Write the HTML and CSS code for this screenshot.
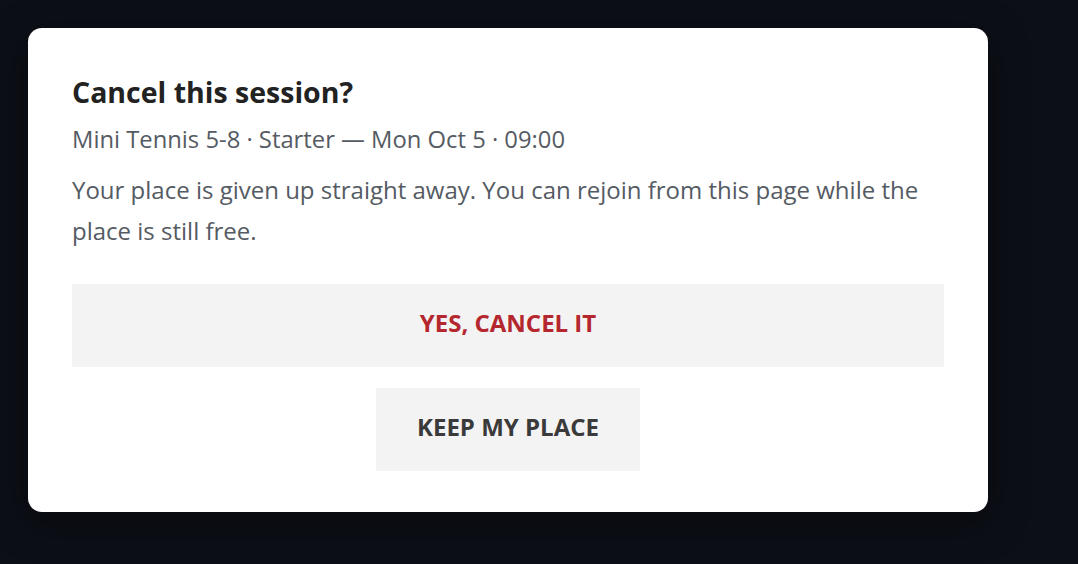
FILE: index.html
```html
<!DOCTYPE html>
<html lang="en">
<head>
    <meta charset="UTF-8">
    <meta name="viewport" content="width=device-width, initial-scale=1.0">
    <title>Cancel session</title>
    <link rel="stylesheet" href="styles.css">
</head>
<body>
    <div class="dialog">
        <h2 class="title">Cancel this session?</h2>
        <p class="meta">Mini Tennis 5-8 · Starter — Mon Oct 5 · 09:00</p>
        <p class="body">Your place is given up straight away. You can rejoin from this page while the place is still free.</p>
        <div class="actions">
            <button class="btn btn-danger">YES, CANCEL IT</button>
            <button class="btn btn-keep">KEEP MY PLACE</button>
        </div>
    </div>
</body>
</html>
```

FILE: styles.css
```css
* {
    margin: 0;
    padding: 0;
    box-sizing: border-box;
    font-family: "Open Sans", sans-serif;
}
body {
    height: 100vh;
    background: #0c0f16;
    padding: 28px;
}
.dialog {
    width: 960px;
    height: 484px;
    background: #fff;
    border-radius: 14px;
    padding: 46px 44px 41px;
    box-shadow: 0 10px 40px rgba(0, 0, 0, 0.4);
}
.title {
    font-size: 28.5px;
    font-weight: 700;
    color: #222;
    line-height: 36px;
}
.meta {
    margin-top: 14px;
    font-size: 23.8px;
    color: #555b63;
    line-height: 30px;
}
.body {
    margin-top: 15px;
    font-size: 24px;
    color: #555b63;
    line-height: 41px;
}
.actions {
    margin-top: 33px;
    display: flex;
    flex-direction: column;
    align-items: center;
    gap: 21px;
}
.btn {
    height: 83px;
    padding-bottom: 6px;
    border: none;
    background: #f3f3f3;
    font-size: 24px;
    font-weight: 700;
    cursor: pointer;
}
.btn-danger {
    width: 100%;
    color: #b5272e;
}
.btn-keep {
    width: 264px;
    color: #3a3a3a;
}
```
